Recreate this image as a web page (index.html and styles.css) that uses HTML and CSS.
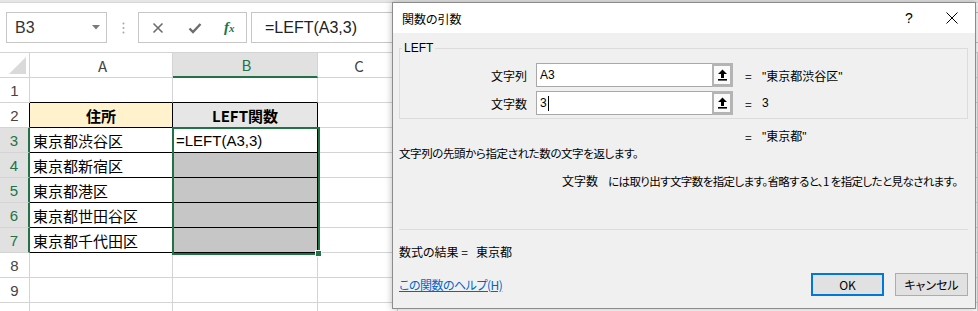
FILE: index.html
```html
<!DOCTYPE html>
<html lang="ja">
<head>
    <meta charset="UTF-8">
    <title>関数の引数 - LEFT</title>
    <link rel="stylesheet" href="styles.css">
</head>
<body>

    <div class="excel">
        <div class="topstrip"></div>

        <div class="fbar">
            <div class="namebox">
                <span>B3</span>
                <svg class="dd" width="8" height="5" viewBox="0 0 8 5"><path d="M0 0H8L4 4.5Z" fill="#7a7a7a"/></svg>
            </div>
            <svg class="grip" width="3" height="12" viewBox="0 0 3 12">
                <circle cx="1.5" cy="1.5" r="1" fill="#a6a6a6"/>
                <circle cx="1.5" cy="6" r="1" fill="#a6a6a6"/>
                <circle cx="1.5" cy="10.5" r="1" fill="#a6a6a6"/>
            </svg>
            <div class="tools">
                <svg width="12" height="12" viewBox="0 0 12 12"><path d="M1.5 1.5L10.5 10.5M10.5 1.5L1.5 10.5" stroke="#6d6d6d" stroke-width="1.6"/></svg>
                <svg width="14" height="12" viewBox="0 0 14 12"><path d="M1.5 6.5L5 10L12.5 2" stroke="#6d6d6d" stroke-width="2.4" fill="none"/></svg>
                <span class="fx">f<small>x</small></span>
            </div>
            <div class="formula">=LEFT(A3,3)</div>
        </div>

        <div class="sheet">
            <div class="row head">
                <div class="rh corner"><svg width="17" height="17" viewBox="0 0 17 17"><path d="M17 0V17H0Z" fill="#dadada"/></svg></div>
                <div class="c ca">A</div>
                <div class="c cb on">B</div>
                <div class="c cc">C</div>
                <div class="c cd"></div>
            </div>
            <div class="row">
                <div class="rh">1</div>
                <div class="c ca tb"></div>
                <div class="c cb tb"></div>
                <div class="c cc"></div>
                <div class="c cd"></div>
            </div>
            <div class="row">
                <div class="rh tl">2</div>
                <div class="c ca t th-a">住所</div>
                <div class="c cb t th-b">LEFT関数</div>
                <div class="c cc"></div>
                <div class="c cd"></div>
            </div>
            <div class="row">
                <div class="rh sel">3</div>
                <div class="c ca t">東京都渋谷区</div>
                <div class="c cb t num">=LEFT(A3,3)</div>
                <div class="c cc"></div>
                <div class="c cd"></div>
            </div>
            <div class="row">
                <div class="rh sel">4</div>
                <div class="c ca t">東京都新宿区</div>
                <div class="c cb t shade"></div>
                <div class="c cc"></div>
                <div class="c cd"></div>
            </div>
            <div class="row">
                <div class="rh sel">5</div>
                <div class="c ca t">東京都港区</div>
                <div class="c cb t shade"></div>
                <div class="c cc"></div>
                <div class="c cd"></div>
            </div>
            <div class="row">
                <div class="rh sel">6</div>
                <div class="c ca t">東京都世田谷区</div>
                <div class="c cb t shade"></div>
                <div class="c cc"></div>
                <div class="c cd"></div>
            </div>
            <div class="row">
                <div class="rh sel">7</div>
                <div class="c ca t">東京都千代田区</div>
                <div class="c cb t shade"></div>
                <div class="c cc"></div>
                <div class="c cd"></div>
            </div>
            <div class="row">
                <div class="rh">8</div>
                <div class="c ca"></div>
                <div class="c cb"></div>
                <div class="c cc"></div>
                <div class="c cd"></div>
            </div>
            <div class="row">
                <div class="rh">9</div>
                <div class="c ca"></div>
                <div class="c cb"></div>
                <div class="c cc"></div>
                <div class="c cd"></div>
            </div>
            <div class="row">
                <div class="rh">10</div>
                <div class="c ca"></div>
                <div class="c cb"></div>
                <div class="c cc"></div>
                <div class="c cd"></div>
            </div>

            <!-- selected range B3:B7 -->
            <div class="selection"><span class="handle"></span></div>
        </div>
    </div>

    <div class="dialog">
        <div class="dtitle">
            <span>関数の引数</span>
            <span class="tbtn help">?</span>
            <span class="tbtn close">
                <svg width="12" height="12" viewBox="0 0 12 12"><path d="M0.5 0.5L11.5 11.5M11.5 0.5L0.5 11.5" stroke="#000" stroke-width="1"/></svg>
            </span>
        </div>

        <div class="dbody">
            <fieldset class="group">
                <legend>LEFT</legend>
                <div class="arg">
                    <label>文字列</label>
                    <div class="box">A3</div>
                    <span class="ref"><svg width="11" height="12" viewBox="0 0 11 12"><path d="M5.5 0.5L10 5H7V9H4V5H1Z" fill="#000"/><rect x="1" y="10" width="9" height="1.6" fill="#000"/></svg></span>
                    <span class="eq">=</span>
                    <span class="val">"東京都渋谷区"</span>
                </div>
                <div class="arg">
                    <label>文字数</label>
                    <div class="box">3<i class="caret"></i></div>
                    <span class="ref"><svg width="11" height="12" viewBox="0 0 11 12"><path d="M5.5 0.5L10 5H7V9H4V5H1Z" fill="#000"/><rect x="1" y="10" width="9" height="1.6" fill="#000"/></svg></span>
                    <span class="eq">=</span>
                    <span class="val">3</span>
                </div>
            </fieldset>

            <div class="result"><span class="eq">=</span><span class="val">"東京都"</span></div>

            <p class="desc">文字列の先頭から指定された数の文字を返します。</p>
            <p class="argdesc"><span class="an">文字数</span><span>には取り出す文字数を指定します。省略すると、1 を指定したと見なされます。</span></p>

            <hr class="sep">

            <p class="total">数式の結果 =&nbsp;&nbsp; 東京都</p>

            <div class="foot">
                <a class="helplink" href="#">この関数のヘルプ(H)</a>
                <button class="btn ok">OK</button>
                <button class="btn">キャンセル</button>
            </div>
        </div>
    </div>

</body>
</html>
```

FILE: styles.css
```css
html {
    overflow: hidden;
}

body {
    margin: 0;
    width: 978px;
    height: 311px;
    overflow: hidden;
    position: relative;
    background: #ffffff;
    font-family: "Liberation Sans", "Noto Sans CJK JP", sans-serif;
    color: #000;
}

/* ---------- spreadsheet ---------- */

.excel {
    height: 311px;
    overflow: hidden;
}

.topstrip {
    height: 2px;
    background: #e6e6e6;
    border-bottom: 1px solid #d6d6d6;
}

.fbar {
    height: 49px;
    display: flex;
    align-items: flex-start;
    padding-top: 9px;
    box-sizing: border-box;
}

.namebox, .tools, .formula {
    height: 31px;
    border: 1px solid #c6c6c6;
    box-sizing: border-box;
    display: flex;
    align-items: center;
}

.namebox {
    margin-left: 6px;
    width: 101px;
    padding: 0 6px 0 8px;
    font-size: 16px;
    color: #333;
    justify-content: space-between;
}

.grip {
    margin: 10px 13px 0 15px;
}

.tools {
    width: 109px;
    padding-left: 13px;
    gap: 24px;
}

.fx {
    font-family: "Liberation Serif", serif;
    font-style: italic;
    font-weight: bold;
    font-size: 15px;
    color: #217346;
    margin-left: -2px;
}

.fx small {
    font-size: 11px;
}

.formula {
    margin-left: 4px;
    flex: 1;
    padding-left: 13px;
    font-size: 16px;
    color: #222;
    border-right: none;
}

.sheet {
    position: relative;
    border-top: 1px solid #d4d4d4;
}

.row {
    display: flex;
    height: 25px;
}

.rh, .c {
    box-sizing: border-box;
    border-right: 1px solid #d4d4d4;
    border-bottom: 1px solid #d4d4d4;
    display: flex;
    align-items: center;
}

.rh {
    width: 30px;
    justify-content: center;
    font-size: 15px;
    color: #444;
}

.corner {
    justify-content: flex-end;
    align-items: flex-end;
    padding: 0 3px 3px 0;
}

.head .c {
    justify-content: center;
    font-size: 15px;
    color: #444;
}

.head .on {
    background: #e1e1e1;
    color: #217346;
    border-bottom: 2px solid #217346;
}

.ca { width: 143px; }
.cb { width: 145px; }
.cc { width: 80px; }
.cd { flex: 1; }

.c {
    font-family: "Noto Sans CJK JP", sans-serif;
    font-size: 15px;
    padding-left: 3px;
}

.num {
    font-family: "Liberation Sans", "Noto Sans CJK JP", sans-serif;
}

.tb {
    border-bottom-color: #000;
}

.t {
    border-right-color: #000;
    border-bottom-color: #000;
}

.tl {
    border-right-color: #000;
}

.sel {
    background: #e1e1e1;
    color: #217346;
    border-right: 2px solid #217346;
}

.th-a, .th-b {
    justify-content: center;
    font-weight: bold;
    padding-left: 0;
}

.th-a { background: #fff2cc; }
.th-b { background: #e7e6e6; }

.shade {
    background: #c6c6c6;
}

.selection {
    position: absolute;
    left: 172px;
    top: 74px;
    width: 148px;
    height: 128px;
    box-sizing: border-box;
    border: 2px solid #217346;
    pointer-events: none;
}

.handle {
    position: absolute;
    right: -4px;
    bottom: -4px;
    width: 5px;
    height: 5px;
    background: #217346;
    border: 1px solid #fff;
}

/* ---------- dialog ---------- */

.dialog {
    position: absolute;
    left: 392px;
    top: 2px;
    width: 584px;
    height: 307px;
    box-sizing: border-box;
    border: 1px solid #8c8c8c;
    background: #f0f0f0;
    box-shadow: 0 0 7px rgba(0, 0, 0, 0.28);
    font-family: "Noto Sans CJK JP", sans-serif;
    font-feature-settings: "palt";
    font-size: 12px;
    display: flex;
    flex-direction: column;
}

.dtitle {
    height: 30px;
    background: #ffffff;
    display: flex;
    align-items: center;
    padding-left: 9px;
    font-size: 12px;
}

.tbtn {
    height: 30px;
    display: flex;
    align-items: center;
    justify-content: center;
}

.help {
    margin-left: auto;
    width: 30px;
    font-family: "Liberation Sans", sans-serif;
    font-size: 14px;
    margin-right: 5px;
}

.close {
    width: 46px;
}

.dbody {
    flex: 1;
    padding: 0 7px 10px 6px;
    display: flex;
    flex-direction: column;
}

.group {
    margin: 8px 0 0;
    padding: 0 0 3px;
    border: 1px solid #dcdcdc;
    height: 78px;
    box-sizing: border-box;
}

.group legend {
    font-family: "Liberation Sans", sans-serif;
    font-size: 12px;
    line-height: 14px;
    padding: 0 2px;
    margin-left: 2px;
}

.arg {
    display: flex;
    align-items: center;
    height: 24px;
    margin-top: 4px;
}

.arg:first-of-type {
    margin-top: 8px;
}

.arg label {
    width: 127px;
    text-align: right;
    padding-right: 9px;
}

.box {
    width: 176px;
    height: 24px;
    box-sizing: border-box;
    background: #fff;
    border: 1px solid #a8a8a8;
    border-right: none;
    font-family: "Liberation Sans", sans-serif;
    font-size: 12px;
    padding-left: 3px;
    display: flex;
    align-items: center;
}

.caret {
    display: inline-block;
    width: 1px;
    height: 15px;
    background: #000;
    margin-left: 1px;
}

.ref {
    width: 21px;
    height: 24px;
    box-sizing: border-box;
    border: 3px solid #b4b4b4;
    border-left-width: 2px;
    background: #fafafa;
    display: flex;
    align-items: center;
    justify-content: center;
}

.eq {
    margin-left: 12px;
    width: 17px;
}

.val {
    font-family: "Liberation Sans", "Noto Sans CJK JP", sans-serif;
}

.result {
    display: flex;
    line-height: 16px;
    margin-top: 10px;
    padding-left: 334px;
}

.desc, .argdesc, .total {
    margin: 0;
    line-height: 16px;
}

.desc {
    margin-top: 0;
    font-size: 11.5px;
    letter-spacing: -0.4px;
}

.argdesc {
    margin-top: 12px;
    padding-left: 163px;
    white-space: nowrap;
    font-size: 11.5px;
    letter-spacing: -0.6px;
}

.an {
    margin-right: 10px;
    letter-spacing: 0;
    font-size: 12px;
}

.sep {
    margin: 40px 0 0;
    border: none;
    border-top: 1px solid #dcdcdc;
}

.total {
    margin-top: 14px;
}

.foot {
    margin-top: 13px;
    display: flex;
    align-items: center;
    height: 23px;
}

.helplink {
    color: #0066cc;
    text-decoration: underline;
    margin-right: auto;
    letter-spacing: -0.5px;
}

.btn {
    width: 73px;
    height: 23px;
    box-sizing: border-box;
    background: #e1e1e1;
    border: 1px solid #adadad;
    font-family: "Noto Sans CJK JP", sans-serif;
    font-feature-settings: "palt";
    font-size: 12px;
    padding: 0;
    margin-left: 11px;
}

.ok {
    border: 2px solid #0078d7;
}
```
